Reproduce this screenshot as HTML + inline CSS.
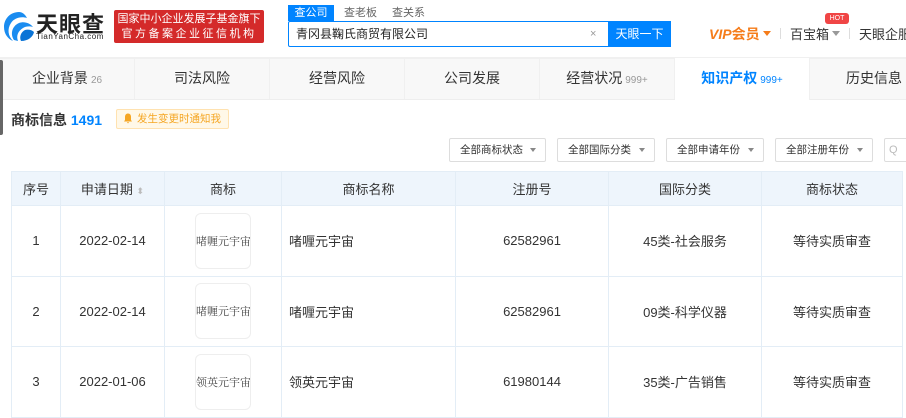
<!DOCTYPE html>
<html><head><meta charset="utf-8"><style>
*{margin:0;padding:0;box-sizing:border-box}
body{width:906px;height:415px;overflow:hidden;background:#fff;font-family:"Liberation Sans","Noto Sans CJK SC",sans-serif;color:#333;position:relative}
.a{position:absolute}
.tab{position:absolute;top:58px;height:41px;width:135px;text-align:center;line-height:41px;font-size:14px;color:#333;border-right:1px solid #f0f0f0}
.tab small{font-size:10px;color:#999;margin-left:3px}
.btn{position:absolute;top:138px;height:24px;border:1px solid #ddd;border-radius:2px;font-size:10.5px;line-height:22px;padding-left:10px;color:#333;background:#fff}
.btn:after{content:"";position:absolute;right:9px;top:9px;border:3px solid transparent;border-top:4px solid #888}
table{position:absolute;left:11px;top:171px;border-collapse:collapse;font-size:13px}
td,th{border:1px solid #e3edf6;text-align:center;font-weight:normal}
th{background:#eef5fc;height:34px;font-size:13px}
td{height:70.5px}
.lg{width:56px;height:56px;border:1px solid #eee;border-radius:6px;margin:0 auto;font-family:"Noto Serif CJK SC","Liberation Serif",serif;font-size:11px;line-height:54px;color:#444;white-space:nowrap;overflow:hidden}
</style></head><body>
<svg class="a" style="left:2px;top:10px" width="34" height="32" viewBox="0 0 34 32"><path d="M17 2C8 2 2 9 2 17c0 7 4 12 9 14C6 26 5 19 9 13c3-5 10-7 16-5-2-4-5-6-8-6z" fill="#1a8cf0"/><path d="M12 30c-4-6-2-14 5-17 5-2 11 0 14 4-3-1-7-1-10 1-5 3-7 8-5 13z" fill="#1a8cf0"/><path d="M19 31c-2-4 0-9 4-11 3-1 7 0 9 2-1 5-6 9-13 9z" fill="#0b74d6"/></svg>
<div class="a" style="left:36px;top:7px;font-size:22px;font-weight:bold;color:#222;letter-spacing:1px">天眼查</div>
<div class="a" style="left:36px;top:32px;font-size:8px;color:#222;letter-spacing:.5px">TianYanCha.com</div>
<div class="a" style="left:114px;top:10px;width:150px;height:33px;background:#d42a2a;border-radius:2px;color:#fff;font-size:11px;text-align:center;line-height:15px;padding-top:2px">国家中小企业发展子基金旗下<br><span style="letter-spacing:2.5px">官方备案企业征信机构</span></div>
<div class="a" style="left:288px;top:5px;width:46px;height:16px;background:#0084ff;color:#fff;font-size:11px;text-align:center;line-height:16px">查公司</div>
<div class="a" style="left:344px;top:5px;font-size:11px;color:#666;line-height:16px">查老板</div>
<div class="a" style="left:392px;top:5px;font-size:11px;color:#666;line-height:16px">查关系</div>
<div class="a" style="left:288px;top:21px;width:383px;height:26px;border:1px solid #0084ff;border-radius:2px 0 0 2px"></div>
<div class="a" style="left:296px;top:21px;font-size:12px;line-height:26px;color:#222">青冈县鞠氏商贸有限公司</div>
<div class="a" style="left:590px;top:21px;font-size:11px;line-height:26px;color:#999">×</div>
<div class="a" style="left:608px;top:21px;width:63px;height:26px;background:#0084ff;color:#fff;font-size:12px;text-align:center;line-height:26px">天眼一下</div>
<div class="a" style="left:709px;top:24px;font-size:14px;font-weight:bold;color:#f57c1a;font-style:italic">VIP<span style="font-style:normal">会员</span></div>
<div class="a" style="left:763px;top:31px;border:4px solid transparent;border-top:5px solid #f57c1a"></div>
<div class="a" style="left:780px;top:28px;width:1px;height:11px;background:#ddd"></div>
<div class="a" style="left:790px;top:24px;font-size:13px;color:#333">百宝箱</div>
<div class="a" style="left:832px;top:31px;border:4px solid transparent;border-top:5px solid #999"></div>
<div class="a" style="left:825px;top:13px;width:24px;height:11px;background:#f04545;color:#fff;font-size:7px;text-align:center;line-height:11px;border-radius:3px">HOT</div>
<div class="a" style="left:849px;top:28px;width:1px;height:11px;background:#ddd"></div>
<div class="a" style="left:859px;top:24px;font-size:13px;color:#333;white-space:nowrap">天眼企服</div>
<div class="a" style="left:0;top:57px;width:906px;height:2px;background:#f0f0f0"></div>
<div class="a" style="left:0;top:59px;width:906px;height:41px;background:#f8f8f8;border-bottom:1px solid #eee"></div>
<div class="tab" style="left:0">企业背景<small>26</small></div>
<div class="tab" style="left:135px">司法风险</div>
<div class="tab" style="left:270px">经营风险</div>
<div class="tab" style="left:405px">公司发展</div>
<div class="tab" style="left:540px">经营状况<small>999+</small></div>
<div class="tab" style="left:675px;background:#fff;color:#0084ff;font-weight:bold;height:42px">知识产权<small style="color:#0084ff;font-weight:normal">999+</small></div>
<div class="tab" style="left:810px;text-align:left;padding-left:36px;border:none">历史信息</div>
<div class="a" style="left:0;top:60px;width:3px;height:75px;background:#666;border-radius:0 2px 2px 0"></div>
<div class="a" style="left:11px;top:110px;font-size:14px;font-weight:bold;color:#333">商标信息 <span style="color:#0084ff">1491</span></div>
<div class="a" style="left:116px;top:109px;width:113px;height:20px;background:#fff8e8;border:1px solid #ffe2b0;border-radius:2px;font-size:10.5px;color:#f5a623;line-height:18px;padding-left:20px;white-space:nowrap">发生变更时通知我</div>
<svg class="a" style="left:123px;top:113px" width="10" height="11" viewBox="0 0 10 11"><path d="M5 0.5C3 0.5 2 2 2 4v3L1 8.5h8L8 7V4C8 2 7 .5 5 .5z M4 9.3h2a1 1 0 01-2 0z" fill="#f5a623"/></svg>
<div class="btn" style="left:449px;width:97px">全部商标状态</div>
<div class="btn" style="left:557px;width:98px">全部国际分类</div>
<div class="btn" style="left:666px;width:98px">全部申请年份</div>
<div class="btn" style="left:775px;width:98px">全部注册年份</div>
<div class="a" style="left:884px;top:138px;width:30px;height:24px;border:1px solid #ddd;border-radius:2px;font-size:11px;color:#bbb;line-height:22px;padding-left:4px">Q</div>
<table>
<tr><th style="width:49px">序号</th><th style="width:104px">申请日期 <span style="color:#bbb;font-size:9px">⬍</span></th><th style="width:117px">商标</th><th style="width:174px">商标名称</th><th style="width:153px">注册号</th><th style="width:153px">国际分类</th><th style="width:141px">商标状态</th></tr>
<tr><td>1</td><td>2022-02-14</td><td><div class="lg">啫喱元宇宙</div></td><td style="text-align:left;padding-left:7px">啫喱元宇宙</td><td>62582961</td><td>45类-社会服务</td><td>等待实质审查</td></tr>
<tr><td>2</td><td>2022-02-14</td><td><div class="lg">啫喱元宇宙</div></td><td style="text-align:left;padding-left:7px">啫喱元宇宙</td><td>62582961</td><td>09类-科学仪器</td><td>等待实质审查</td></tr>
<tr><td>3</td><td>2022-01-06</td><td><div class="lg">领英元宇宙</div></td><td style="text-align:left;padding-left:7px">领英元宇宙</td><td>61980144</td><td>35类-广告销售</td><td>等待实质审查</td></tr>
</table>
</body></html>
